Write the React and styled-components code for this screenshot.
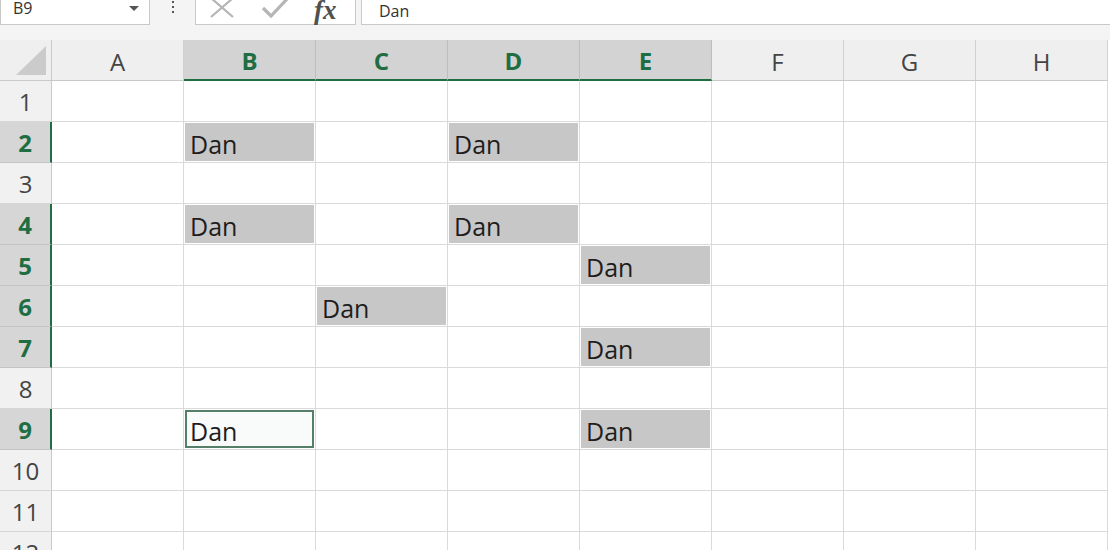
import styled, { createGlobalStyle } from 'styled-components'

const GlobalStyle = createGlobalStyle`
  body {
    margin: 0;
    background: #ffffff;
    font-family: 'Open Sans', 'Noto Sans', sans-serif;
    overflow: hidden;
  }
`

const Window = styled.div`
  width: 1110px;
  height: 550px;
  overflow: hidden;
  background: #f4f4f4;
  display: flex;
  flex-direction: column;
`

const FormulaBar = styled.div`
  display: flex;
  align-items: stretch;
  height: 25px;
  flex-shrink: 0;
`

const NameBox = styled.div`
  width: 150px;
  box-sizing: border-box;
  background: #fff;
  border: 1px solid #c9c9c9;
  border-top: none;
  display: flex;
  justify-content: space-between;
  padding: 0 10px 0 12px;
`

const BarText = styled.span`
  font-size: 16px;
  line-height: 20px;
  margin-top: -2px;
  color: #333;
`

const DropArrow = styled.span`
  width: 0;
  height: 0;
  margin-top: 6px;
  border-left: 5px solid transparent;
  border-right: 5px solid transparent;
  border-top: 5px solid #555;
`

const Dots = styled.div`
  width: 45px;
  display: flex;
  flex-direction: column;
  align-items: center;
  gap: 3px;
  padding-top: 1px;

  span {
    width: 2px;
    height: 2px;
    background: #555;
  }
`

const FuncBox = styled.div`
  width: 161px;
  box-sizing: border-box;
  background: #fff;
  border: 1px solid #c9c9c9;
  border-top: none;
  display: flex;
  align-items: flex-start;
  padding-left: 14px;
  gap: 25px;
`

const Fx = styled.span`
  font-family: 'Liberation Serif', serif;
  font-style: italic;
  font-weight: 700;
  font-size: 27px;
  line-height: 20px;
  color: #505050;
  margin-left: 0;
`

const Input = styled.div`
  flex: 1;
  margin-left: 5px;
  box-sizing: border-box;
  background: #fff;
  border: 1px solid #c9c9c9;
  border-top: none;
  border-right: none;
  padding-left: 17px;
`

const Gap = styled.div`
  height: 15px;
  flex-shrink: 0;
`

const Sheet = styled.div`
  display: grid;
  grid-template-columns: 52px repeat(8, 132px);
  grid-auto-rows: 41px;
  background: #fff;
`

const Corner = styled.div`
  background: #efefef;
  box-sizing: border-box;
  border-right: 1px solid #c9c9c9;
  border-bottom: 1px solid #c9c9c9;
  display: flex;
  align-items: flex-end;
  justify-content: flex-end;
  padding: 0 5px 5px 0;
`

const ColHead = styled.div`
  box-sizing: border-box;
  background: ${p => (p.$active ? '#d3d3d3' : '#efefef')};
  border-right: 1px solid ${p => (p.$active ? '#bdbdbd' : '#d0d0d0')};
  border-bottom: ${p => (p.$active ? '2px solid #1f6e43' : '1px solid #c9c9c9')};
  color: ${p => (p.$active ? '#1f6e43' : '#444')};
  font-weight: ${p => (p.$active ? 700 : 400)};
  font-size: 24px;
  display: flex;
  align-items: center;
  justify-content: center;
  padding-top: 2px;
`

const RowHead = styled.div`
  box-sizing: border-box;
  background: ${p => (p.$active ? '#d6d6d6' : '#f1f1f1')};
  border-bottom: 1px solid ${p => (p.$active ? '#c4c4c4' : '#d6d6d6')};
  border-right: ${p => (p.$active ? '2px solid #1f6e43' : '1px solid #c9c9c9')};
  color: ${p => (p.$active ? '#1f6e43' : '#444')};
  font-weight: ${p => (p.$active ? 700 : 400)};
  font-size: 24px;
  display: flex;
  align-items: center;
  justify-content: center;
`

const Cell = styled.div`
  box-sizing: border-box;
  border-right: 1px solid #dadada;
  border-bottom: 1px solid #dadada;
  padding: 1px;
  display: flex;
`

const Fill = styled.div`
  flex: 1;
  box-sizing: border-box;
  background: ${p => (p.$active ? '#f9fbfa' : '#c7c7c7')};
  border: ${p => (p.$active ? '2px solid #567f69' : 'none')};
  padding-left: ${p => (p.$active ? '3px' : '5px')};
  display: flex;
  align-items: center;
  font-size: 25px;
  color: #1e1e1e;
  padding-top: 3px;
`

const cols = ['A', 'B', 'C', 'D', 'E', 'F', 'G', 'H']
const activeCols = ['B', 'C', 'D', 'E']

const data = {
  2: { B: 'Dan', D: 'Dan' },
  4: { B: 'Dan', D: 'Dan' },
  5: { E: 'Dan' },
  6: { C: 'Dan' },
  7: { E: 'Dan' },
  9: { B: 'Dan', E: 'Dan' },
}

export default function App() {
  const rows = Array.from({ length: 12 }, (_, i) => i + 1)

  return (
    <Window>
      <GlobalStyle />
      <FormulaBar>
        <NameBox>
          <BarText>B9</BarText>
          <DropArrow />
        </NameBox>
        <Dots>
          <span />
          <span />
          <span />
        </Dots>
        <FuncBox>
          <svg width="26" height="18" viewBox="0 0 26 18">
            <path d="M1 -2 L23 17 M23 -2 L1 17" stroke="#b5b5b5" strokeWidth="2.2" fill="none" />
          </svg>
          <svg width="28" height="18" viewBox="0 0 28 18">
            <path d="M2 8 L10 16 L27 -2" stroke="#b5b5b5" strokeWidth="3.2" fill="none" />
          </svg>
          <Fx>fx</Fx>
        </FuncBox>
        <Input>
          <BarText>Dan</BarText>
        </Input>
      </FormulaBar>
      <Gap />
      <Sheet>
        <Corner>
          <svg width="30" height="29" viewBox="0 0 30 29">
            <path d="M30 0 L30 29 L0 29 Z" fill="#cbcbcb" />
          </svg>
        </Corner>
        {cols.map(c => (
          <ColHead key={c} $active={activeCols.includes(c)}>{c}</ColHead>
        ))}
        {rows.map(r => [
          <RowHead key={'h' + r} $active={!!data[r]}>{r}</RowHead>,
          ...cols.map(c => {
            const v = data[r] && data[r][c]
            const isActive = r === 9 && c === 'B'
            return (
              <Cell key={c + r}>
                {v && <Fill $active={isActive}>{v}</Fill>}
              </Cell>
            )
          }),
        ])}
      </Sheet>
    </Window>
  )
}
